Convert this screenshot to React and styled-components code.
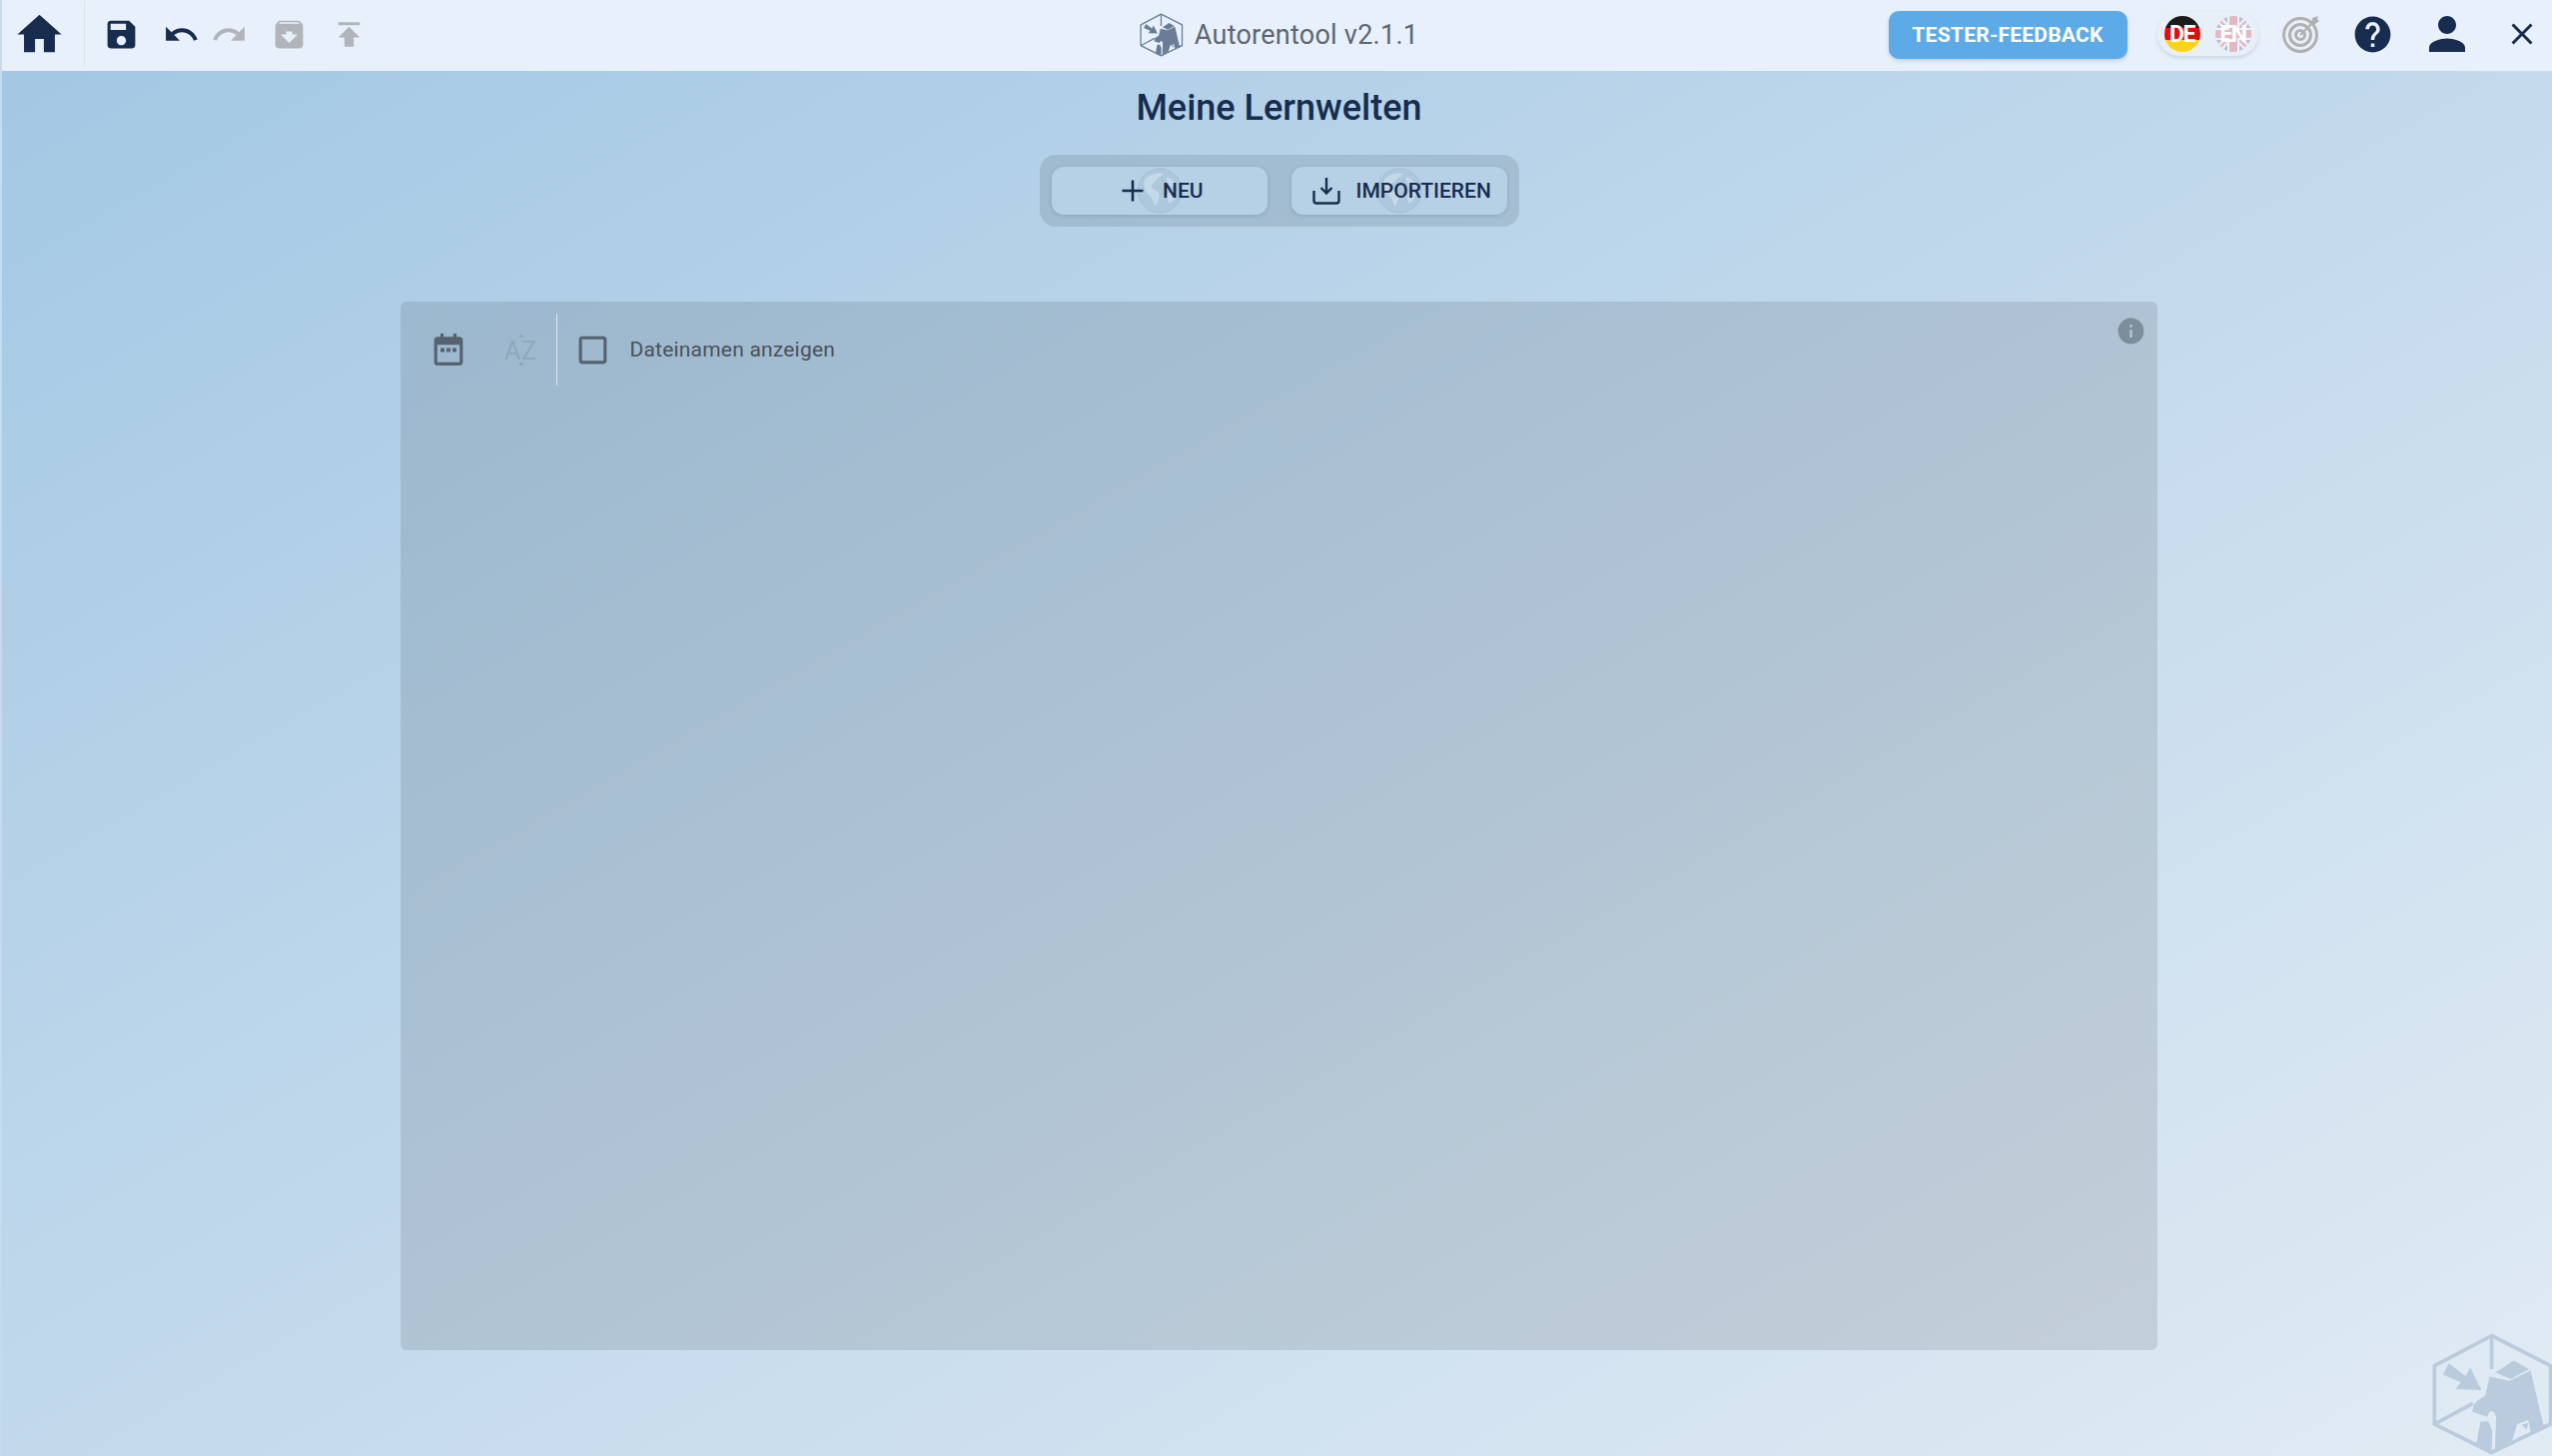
import React from "react";
import styled, { createGlobalStyle } from "styled-components";

const Global = createGlobalStyle`
  html, body { margin: 0; padding: 0; height: 100%; }
  body { font-family: Roboto, "Liberation Sans", sans-serif; overflow: hidden; }
  #root { height: 100%; }
`;

const Page = styled.div`
  position: relative;
  box-sizing: border-box;
  height: 100vh;
  display: flex;
  flex-direction: column;
  overflow: hidden;
  border-left: 2px solid #c6dbee;
  background: linear-gradient(to bottom right, #a2c7e3 0%, #c2d9ec 50%, #e1ebf4 100%);
`;

const Header = styled.header`
  box-sizing: border-box;
  height: 71px;
  padding-bottom: 3px;
  flex: none;
  display: grid;
  grid-template-columns: 1fr auto 1fr;
  align-items: center;
  background: #e8f1fb;
`;

const HeaderLeft = styled.div`
  display: flex;
  align-items: center;
  padding-left: 11px;
`;

const HeaderRight = styled.div`
  display: flex;
  align-items: center;
  justify-content: flex-end;
  padding-right: 12.5px;
`;

const VDivider = styled.div`
  width: 1px;
  height: 66px;
  margin: 0 18px 0 18px;
  background: #dfe3e4;
`;

const Glyph = styled.svg`
  flex: none;
  display: block;
  width: ${(p) => p.$size}px;
  height: ${(p) => p.$size}px;
  margin-left: ${(p) => p.$ml || 0}px;
  fill: ${(p) => (p.$off ? "#b1b5bb" : "#172c4f")};
`;

const Brand = styled.div`
  display: flex;
  align-items: center;
  gap: 11px;
  padding-left: 4px;
  margin-top: 2px;
`;

const BrandName = styled.span`
  font-size: 27px;
  color: #5d6675;
  letter-spacing: 0.25px;
`;

const BrandLogo = styled.svg`
  width: 44px;
  height: 44px;
  display: block;
  color: #6b7d96;
`;

const Feedback = styled.button`
  width: 239px;
  height: 48px;
  margin-top: 2px;
  border: 0;
  border-radius: 10px;
  background: #5cabe8;
  color: #fff;
  font: 700 21px Roboto, sans-serif;
  letter-spacing: 0.25px;
  text-transform: uppercase;
  box-shadow: 0 2px 4px rgba(40, 70, 110, 0.2);
`;

const LangPill = styled.div`
  width: 101px;
  height: 44px;
  margin-left: 30px;
  box-sizing: border-box;
  padding: 0 7px;
  display: flex;
  align-items: center;
  justify-content: space-between;
  border-radius: 22px;
  background: #e9eff7;
  box-shadow: 0 2px 4px rgba(40, 70, 110, 0.16);
`;

const Flag = styled.div`
  position: relative;
  width: 36px;
  height: 36px;
  display: flex;
  align-items: center;
  justify-content: center;
  color: #fff;
  font-size: 23px;
  font-weight: 700;
  letter-spacing: -1.5px;
  line-height: 1;
  & > svg { position: absolute; inset: 0; width: 36px; height: 36px; }
  & > span { position: relative; }
`;

const Target = styled.svg`
  flex: none;
  width: 38px;
  height: 38px;
  margin-left: 24px;
  display: block;
  color: #b0b0b0;
`;

const Main = styled.main`
  flex: 1;
  display: flex;
  flex-direction: column;
  align-items: center;
  padding: 12px 0 0 4px;
`;

const Title = styled.h1`
  margin: 0;
  height: 50px;
  line-height: 50px;
  font-size: 36px;
  font-weight: 500;
  color: #172c4f;
`;

const ActionGroup = styled.div`
  margin-top: 22px;
  padding: 12px;
  display: flex;
  gap: 24px;
  border-radius: 16px;
  background: rgba(0, 0, 0, 0.1);
`;

const ActionButton = styled.button`
  position: relative;
  width: 216px;
  height: 48px;
  padding: 0 0 0 ${(p) => p.$pad}px;
  border: 0;
  border-radius: 12px;
  display: flex;
  align-items: center;
  gap: ${(p) => p.$gap}px;
  background: #b6d1e6;
  color: #172c4f;
  font: 500 21px Roboto, sans-serif;
  text-transform: uppercase;
  box-shadow: 0 1px 4px rgba(30, 60, 100, 0.18);
  & > span { position: relative; }
`;

const GlobeMark = styled.svg`
  position: absolute;
  left: 85px;
  top: 1px;
  width: 46px;
  height: 46px;
`;

const ButtonIcon = styled.svg`
  position: relative;
  flex: none;
  display: block;
  width: ${(p) => p.$size}px;
  height: ${(p) => p.$size}px;
  fill: none;
  stroke: #172c4f;
`;

const Panel = styled.section`
  position: relative;
  box-sizing: border-box;
  width: 1759px;
  height: 1050px;
  margin-top: 75px;
  padding: 12px 0 0 28px;
  border-radius: 6px;
  background: rgba(0, 0, 0, 0.1);
`;

const PanelBar = styled.div`
  display: flex;
  align-items: center;
  height: 72px;
`;

const CalendarIcon = styled.svg`
  width: 32px;
  height: 32px;
  display: block;
  flex: none;
  margin-left: 4px;
  fill: #56636f;
`;

const SortIcon = styled.svg`
  width: 36px;
  height: 38px;
  display: block;
  flex: none;
  margin-left: 39.5px;
  color: #8fa7bb;
  font-family: Roboto, sans-serif;
`;

const BarDivider = styled.div`
  width: 1px;
  height: 72px;
  margin-left: 16px;
  background: #dbe6ee;
`;

const CheckIcon = styled.svg`
  width: 37px;
  height: 37px;
  display: block;
  flex: none;
  margin-left: 17px;
  fill: #56636f;
`;

const CheckLabel = styled.span`
  margin-left: 19px;
  font-size: 21px;
  letter-spacing: 0.2px;
  color: #4b5157;
`;

const InfoIcon = styled.svg`
  position: absolute;
  top: 14px;
  right: 11px;
  width: 31px;
  height: 31px;
  fill: #7c8d9c;
`;

const CornerLogo = styled.svg`
  position: absolute;
  right: -2px;
  bottom: 0;
  width: 122px;
  height: 124px;
  color: #b9cbdc;
`;

const ICONS = {
  home: "M10 20v-6h4v6h5v-8h3L12 3 2 12h3v8z",
  save: "M17 3H5c-1.11 0-2 .9-2 2v14c0 1.1.89 2 2 2h14c1.1 0 2-.9 2-2V7l-4-4zm-5 16c-1.66 0-3-1.34-3-3s1.34-3 3-3 3 1.34 3 3-1.34 3-3 3zm3-10H5V5h10v4z",
  undo: "M12.5 8c-2.65 0-5.05.99-6.9 2.6L2 7v9h9l-3.62-3.62c1.39-1.16 3.16-1.88 5.12-1.88 3.54 0 6.55 2.31 7.6 5.5l2.37-.78C21.08 11.03 17.15 8 12.5 8z",
  redo: "M18.4 10.6C16.55 8.99 14.15 8 11.5 8c-4.65 0-8.58 3.03-9.96 7.22L3.9 16c1.05-3.19 4.05-5.5 7.6-5.5 1.95 0 3.73.72 5.12 1.88L13 16h9V7l-3.6 3.6z",
  archive: "M20.54 5.23l-1.39-1.68C18.88 3.21 18.47 3 18 3H6c-.47 0-.88.21-1.16.55L3.46 5.23C3.17 5.57 3 6.02 3 6.5V19c0 1.1.9 2 2 2h14c1.1 0 2-.9 2-2V6.5c0-.48-.17-.93-.46-1.27zM12 17.5L6.5 12H10v-2h4v2h3.5L12 17.5zM5.12 5l.81-1h12l.94 1H5.12z",
  publish: "M5 4v2h14V4H5zm0 10h4v6h6v-6h4l-7-7-7 7z",
  help: "M12 2C6.48 2 2 6.48 2 12s4.48 10 10 10 10-4.48 10-10S17.52 2 12 2zm1 17h-2v-2h2v2zm2.07-7.75l-.9.92C13.45 12.9 13 13.5 13 15h-2v-.5c0-1.1.45-2.1 1.17-2.83l1.24-1.26c.37-.36.59-.86.59-1.41 0-1.1-.9-2-2-2s-2 .9-2 2H8c0-2.21 1.79-4 4-4s4 1.79 4 4c0 .88-.36 1.68-.93 2.25z",
  person: "M12 12c2.21 0 4-1.79 4-4s-1.79-4-4-4-4 1.79-4 4 1.79 4 4 4zm0 2c-2.67 0-8 1.34-8 4v2h16v-2c0-2.66-5.33-4-8-4z",
  close: "M19 6.41 17.59 5 12 10.59 6.41 5 5 6.41 10.59 12 5 17.59 6.41 19 12 13.41 17.59 19 19 17.59 13.41 12z",
  box: "M19 5v14H5V5h14m0-2H5c-1.1 0-2 .9-2 2v14c0 1.1.9 2 2 2h14c1.1 0 2-.9 2-2V5c0-1.1-.9-2-2-2z",
  info: "M12 2C6.48 2 2 6.48 2 12s4.48 10 10 10 10-4.48 10-10S17.52 2 12 2zm1 15h-2v-6h2v6zm0-8h-2V7h2v2z",
  calendar: "M7 2h2v2h6V2h2v2h2c1.1 0 2 .9 2 2v14c0 1.1-.9 2-2 2H5c-1.1 0-2-.9-2-2V6c0-1.1.9-2 2-2h2V2zM5 9v11h14V9H5zm2 2h2.500v2.500H7V11zm3.750 0h2.500v2.500h-2.500V11zm3.750 0H17v2.500h-2.500V11z",
};

const Icon = ({ name, size = 37, ml, off }) => (
  <Glyph viewBox="0 0 24 24" $size={size} $ml={ml} $off={off}>
    <path d={ICONS[name]} />
  </Glyph>
);

const LogoArt = () => (
  <g>
    <path
      d="M268 55 445 145V320L268 405 97 320V145Z"
      fill="none"
      stroke="currentColor"
      strokeWidth="11"
      strokeLinejoin="round"
    />
    <path d="M268 55V155M97 320 212 258M445 320 385 342" fill="none" stroke="currentColor" strokeWidth="11" />
    <path d="M140 138 190 176 204 150 238 218 160 215 176 194 122 172Z" fill="currentColor" />
    <path d="M280 165 335 130 380 155 325 185Z" fill="currentColor" />
    <path
      d="M262 178 322 190 385 160 425 330 385 342 378 308 345 320 330 368 278 398 282 300C275 275 262 275 255 298L245 295 210 282 215 262C225 245 245 240 250 232Z"
      fill="currentColor"
    />
    <path d="M235 312 250 312C262 305 262 325 270 340L268 402 222 380Z" fill="currentColor" />
    <path d="M358 322 378 316 374 336Z" fill="currentColor" />
  </g>
);

const GlobeArt = () => (
  <GlobeMark viewBox="0 0 46 46">
    <circle cx="23" cy="23" r="22" fill="#adc7dd" stroke="#a3bdd4" strokeWidth="1" />
    <path
      d="M8 12c5-6 14-8 19-6-2 3-5 3-7 6-1 3-5 3-5 7 0 3 5 3 7 6 2 4-1 9-3 14-3-4-3-9-7-12-3-3-6-8-4-15zM30 9c4 1 8 5 10 9-3 2-6 1-8-2-1-2-3-4-2-7zM31 26c3-2 7-2 9-1-1 5-4 9-7 11-2-3-3-7-2-10z"
      fill="#c4d8ea"
    />
  </GlobeMark>
);

const PlusIcon = () => (
  <ButtonIcon viewBox="0 0 24 24" $size={24} strokeWidth="2.6">
    <path d="M12 1.5v21M1.5 12h21" />
  </ButtonIcon>
);

const ImportIcon = () => (
  <ButtonIcon viewBox="0 0 28 28" $size={28} strokeWidth="2.4">
    <path d="M14 1v15M8.5 11l5.5 5.5 5.5-5.5M1.500 14v10c0 1.500.8 2.500 2.500 2.500h20c1.700 0 2.500-1 2.500-2.500V14" />
  </ButtonIcon>
);

export default function App() {
  return (
    <Page>
      <Global />
      <Header>
        <HeaderLeft>
          <Icon name="home" size={53} />
          <VDivider />
          <Icon name="save" />
          <Icon name="undo" ml={22.5} />
          <Icon name="redo" ml={11} off />
          <Icon name="archive" ml={23} off />
          <Icon name="publish" ml={23} off />
        </HeaderLeft>
        <Brand>
          <BrandLogo viewBox="90 45 365 370">
            <LogoArt />
          </BrandLogo>
          <BrandName>Autorentool v2.1.1</BrandName>
        </Brand>
        <HeaderRight>
          <Feedback>Tester-Feedback</Feedback>
          <LangPill>
            <Flag>
              <svg viewBox="0 0 36 36">
                <defs>
                  <clipPath id="de"><circle cx="18" cy="18" r="18" /></clipPath>
                </defs>
                <g clipPath="url(#de)">
                  <rect width="36" height="12" fill="#1a1a1a" />
                  <rect y="12" width="36" height="12" fill="#dd1010" />
                  <rect y="24" width="36" height="12" fill="#ffd21a" />
                </g>
              </svg>
              <span>DE</span>
            </Flag>
            <Flag>
              <svg viewBox="0 0 36 36">
                <defs>
                  <clipPath id="en"><circle cx="18" cy="18" r="18" /></clipPath>
                </defs>
                <g clipPath="url(#en)" opacity="0.26">
                  <rect width="36" height="36" fill="#1d3f8f" />
                  <path d="M0 0 36 36M36 0 0 36" stroke="#fff" strokeWidth="7" />
                  <path d="M0 0 36 36M36 0 0 36" stroke="#d01c2c" strokeWidth="2.5" />
                  <path d="M18 0V36M0 18H36" stroke="#fff" strokeWidth="12" />
                  <path d="M18 0V36M0 18H36" stroke="#d01c2c" strokeWidth="8" />
                </g>
              </svg>
              <span>EN</span>
            </Flag>
          </LangPill>
          <Target viewBox="0 0 38 38">
            <circle cx="18" cy="20" r="16.5" fill="none" stroke="currentColor" strokeWidth="3" />
            <circle cx="18" cy="20" r="10.5" fill="none" stroke="currentColor" strokeWidth="3" />
            <circle cx="18" cy="20" r="4.5" fill="none" stroke="currentColor" strokeWidth="3" />
            <path d="M18 20 31 7" stroke="currentColor" strokeWidth="2.2" />
            <path d="M29 9 30 3 36 1 35 4 37 6 33 9Z" fill="currentColor" />
          </Target>
          <Icon name="help" size={43} ml={31} />
          <Icon name="person" size={54} ml={26} />
          <Icon name="close" size={36} ml={30} />
        </HeaderRight>
      </Header>
      <Main>
        <Title>Meine Lernwelten</Title>
        <ActionGroup>
          <ActionButton $pad={69.5} $gap={18}>
            <GlobeArt />
            <PlusIcon />
            <span>Neu</span>
          </ActionButton>
          <ActionButton $pad={21} $gap={16}>
            <GlobeArt />
            <ImportIcon />
            <span>Importieren</span>
          </ActionButton>
        </ActionGroup>
        <Panel>
          <PanelBar>
            <CalendarIcon viewBox="3 2 18 20">
              <path d={ICONS.calendar} />
            </CalendarIcon>
            <SortIcon viewBox="0 0 36 38">
              <text x="0" y="29" fontSize="25" fill="currentColor">A</text>
              <text x="17" y="29" fontSize="25" fill="currentColor">Z</text>
              <path d="M14 7 17 3 20 7ZM14 32 20 32 17 36Z" fill="currentColor" />
            </SortIcon>
            <BarDivider />
            <CheckIcon viewBox="0 0 24 24">
              <path d={ICONS.box} />
            </CheckIcon>
            <CheckLabel>Dateinamen anzeigen</CheckLabel>
          </PanelBar>
          <InfoIcon viewBox="0 0 24 24">
            <path d={ICONS.info} />
          </InfoIcon>
        </Panel>
      </Main>
      <CornerLogo viewBox="90 45 365 370">
        <LogoArt />
      </CornerLogo>
    </Page>
  );
}
